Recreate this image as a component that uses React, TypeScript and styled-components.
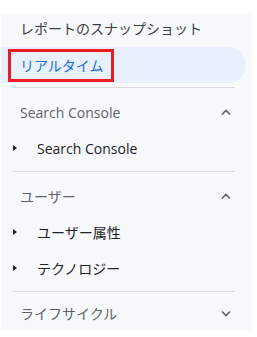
import React from "react";
import styled, { createGlobalStyle } from "styled-components";

const Global = createGlobalStyle`
  html, body { margin: 0; padding: 0; background: #ffffff; }
  body { font-family: "Open Sans", "Noto Sans CJK JP", sans-serif; }
`;

const Panel = styled.nav`
  margin: 13px 0 0 1px;
  width: 252px;
  height: 318px;
  background: #f8f9fa;
  overflow: hidden;
  box-sizing: border-box;
`;

const TopLink = styled.div`
  height: 30px;
  display: flex;
  align-items: center;
  padding-left: 19px;
  font-size: 14px;
  color: #3c4043;
  font-family: "Noto Sans CJK JP", sans-serif;
  margin-bottom: 4px;
`;

const ActivePill = styled.div`
  width: 245px;
  height: 36px;
  background: #e8f0fe;
  border-radius: 0 18px 18px 0;
  display: flex;
  align-items: center;
  padding-left: 7px;
  box-sizing: border-box;
`;

const Marked = styled.span`
  display: inline-flex;
  align-items: center;
  height: 33px;
  box-sizing: border-box;
  border: 3px solid #ec1c24;
  padding: 0 7px 0 9px;
  font-size: 14px;
  color: #1a6fd8;
  font-family: "Noto Sans CJK JP", sans-serif;
`;

const Divider = styled.hr<{ $top: number }>`
  border: none;
  height: 1px;
  background: #dadce0;
  margin: ${(p) => p.$top}px 18px 0 11px;
`;

const Header = styled.div<{ $pad: number }>`
  height: ${(p) => 36 + p.$pad}px;
  padding-top: ${(p) => p.$pad}px;
  box-sizing: border-box;
  display: flex;
  align-items: center;
  justify-content: space-between;
  padding-left: 19px;
  padding-right: 22px;
  font-size: 14px;
  color: #5f6368;
  font-family: "Open Sans", "Noto Sans CJK JP", sans-serif;
`;

const Item = styled.div`
  height: 36px;
  display: flex;
  align-items: center;
  padding-left: 12px;
  font-size: 14px;
  font-weight: 400;
  color: #202124;
  font-family: "Open Sans", "Noto Sans CJK JP", sans-serif;
`;

const Bullet = styled.span`
  width: 0;
  height: 0;
  border-top: 3.5px solid transparent;
  border-bottom: 3.5px solid transparent;
  border-left: 4px solid #202124;
  margin-right: 20px;
`;

const Chevron = ({ up }: { up: boolean }) => (
  <svg width="10" height="7" viewBox="0 0 10 7" fill="none">
    <path
      d={up ? "M1 5.5 L5 1.5 L9 5.5" : "M1 1.5 L5 5.5 L9 1.5"}
      stroke="#5f6368"
      strokeWidth="1.7"
    />
  </svg>
);

const sections = [
  { title: "Search Console", open: true, pad: 6, items: ["Search Console"] },
  { title: "ユーザー", open: true, pad: 6, items: ["ユーザー属性", "テクノロジー"] },
  { title: "ライフサイクル", open: false, pad: 3, items: [] as string[] },
];

export default function App() {
  return (
    <>
      <Global />
      <Panel>
        <TopLink>レポートのスナップショット</TopLink>
        <ActivePill>
          <Marked>リアルタイム</Marked>
        </ActivePill>
        {sections.map((s, i) => (
          <React.Fragment key={s.title}>
            <Divider $top={i === 0 ? 4 : 5} />
            <Header $pad={s.pad}>
              <span>{s.title}</span>
              <Chevron up={s.open} />
            </Header>
            {s.items.map((it) => (
              <Item key={it}>
                <Bullet />
                {it}
              </Item>
            ))}
          </React.Fragment>
        ))}
      </Panel>
    </>
  );
}
